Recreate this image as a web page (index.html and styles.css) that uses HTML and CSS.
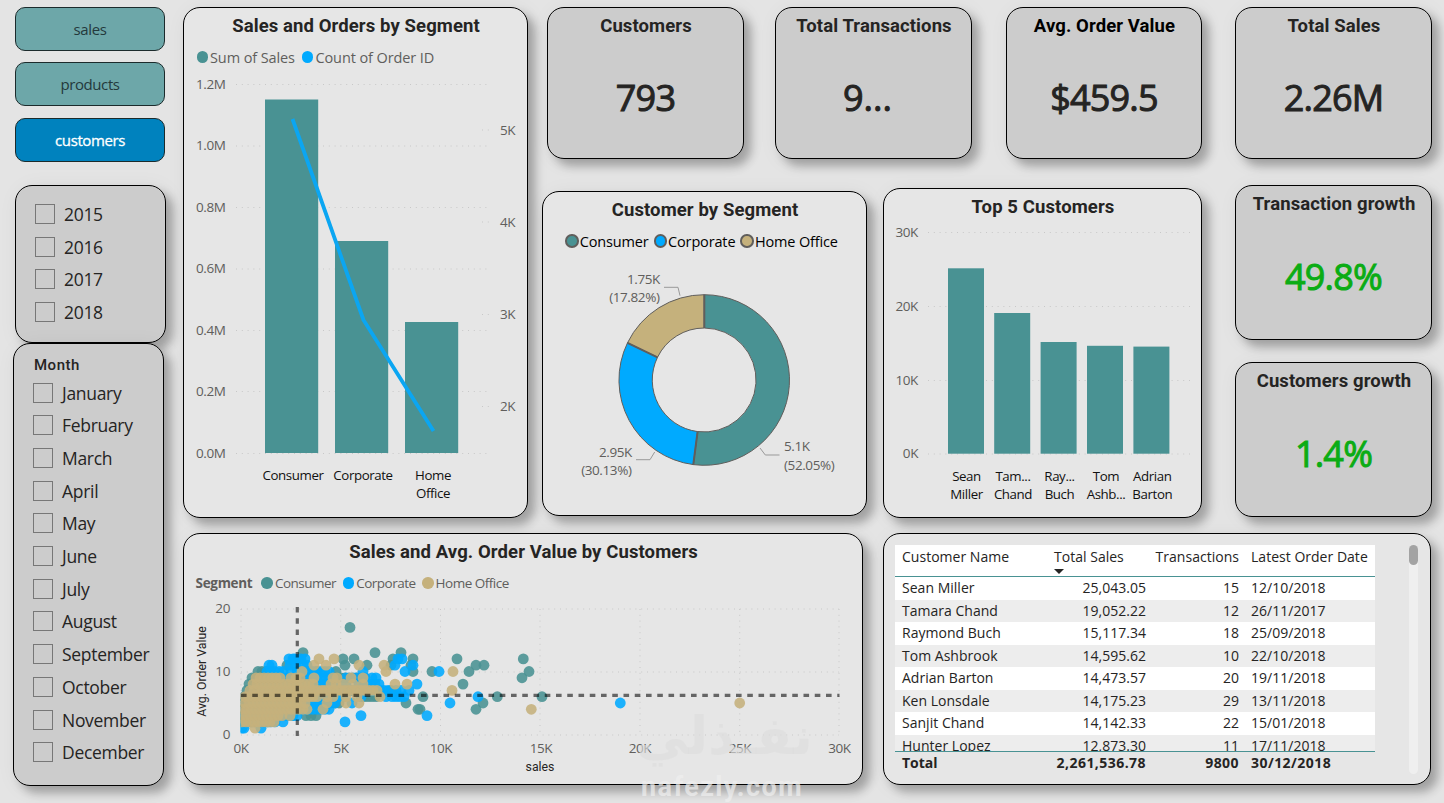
FILE: index.html
```
<!DOCTYPE html>
<html lang="en">
<head>
  <meta charset="utf-8">
  <title>Customers dashboard</title>
  <link rel="stylesheet" href="styles.css">
</head>
<body>
  <div id="wrap">
    <!-- sidebar -->
    <aside class="sidebar">
      <nav class="nav">
        <a href="javascript:;">sales</a>
        <a href="javascript:;">products</a>
        <a href="javascript:;" class="active">customers</a>
      </nav>
      <div class="card dark years">
        <ul class="checks">
          <li>2015</li>
          <li>2016</li>
          <li>2017</li>
          <li>2018</li>
        </ul>
      </div>
      <div class="card dark months">
        <h3>Month</h3>
        <ul class="checks">
          <li>January</li>
          <li>February</li>
          <li>March</li>
          <li>April</li>
          <li>May</li>
          <li>June</li>
          <li>July</li>
          <li>August</li>
          <li>September</li>
          <li>October</li>
          <li>November</li>
          <li>December</li>
        </ul>
      </div>
    </aside>

    <main class="main">
      <div class="top">
        <!-- sales and orders -->
        <section class="card segment">
          <h2>Sales and Orders by Segment</h2>
          <div class="legend">
            <span><i class="dot teal"></i>Sum of Sales</span>
            <span><i class="dot blue"></i>Count of Order ID</span>
          </div>
          <svg class="chart" width="343" height="440" viewBox="184 70 343 440">
            <g class="grid">
              <path d="M236 84.5H488M236 146H488M236 207.5H488M236 269H488M236 330.5H488M236 391.5H488M236 453.5H488"/>
              <path d="M482 130H492M482 222H492M482 314.5H492M482 406.5H492"/>
            </g>
            <g class="bar">
              <rect x="265" y="99.5" width="53.2" height="353.5"/>
              <rect x="335" y="241" width="53.2" height="212"/>
              <rect x="405" y="322" width="53.2" height="131"/>
            </g>
            <path class="line" d="M292.5 119L363.5 320L433.5 431"/>
            <g class="axis">
              <text x="196" y="89">1.2M</text>
              <text x="196" y="150">1.0M</text>
              <text x="196" y="212">0.8M</text>
              <text x="196" y="273">0.6M</text>
              <text x="196" y="335">0.4M</text>
              <text x="196" y="396">0.2M</text>
              <text x="196" y="458">0.0M</text>
              <text x="500" y="135">5K</text>
              <text x="500" y="227">4K</text>
              <text x="500" y="319">3K</text>
              <text x="500" y="411">2K</text>
            </g>
            <g class="cat">
              <text x="293" y="480">Consumer</text>
              <text x="363" y="480">Corporate</text>
              <text x="433" y="480">Home</text>
              <text x="433" y="498">Office</text>
            </g>
          </svg>
        </section>

        <div class="center">
          <div class="kpis">
            <section class="card dark kpi"><h2>Customers</h2><p>793</p></section>
            <section class="card dark kpi"><h2>Total Transactions</h2><p class="cut">9...</p></section>
            <section class="card dark kpi"><h2 class="black">Avg. Order Value</h2><p>$459.5</p></section>
          </div>
          <div class="charts">
            <section class="card donut">
              <h2>Customer by Segment</h2>
              <div class="legend">
                <span><i class="dot teal"></i>Consumer</span>
                <span><i class="dot blue"></i>Corporate</span>
                <span><i class="dot tan"></i>Home Office</span>
              </div>
              <svg class="chart" width="323" height="252" viewBox="543 260 323 252">
                <g class="slices">
                  <path fill="#499293" d="M704.3 294.7A85.3 85.3 0 1 1 693.3 464.6L697.6 431.6A52 52 0 1 0 704.3 328Z"/>
                  <path fill="#00aaff" d="M693.3 464.6A85.3 85.3 0 0 1 627.5 342.8L657.5 357.3A52 52 0 0 0 697.6 431.6Z"/>
                  <path fill="#c5b17c" d="M627.5 342.8A85.3 85.3 0 0 1 704.3 294.7V328A52 52 0 0 0 657.5 357.3Z"/>
                  <path class="split" d="M704.3 294.7V328M693.3 464.6L697.6 431.6M627.5 342.8L657.5 357.3"/>
                </g>
                <path class="leader" d="M680 295.7L678 287.3H664M654.7 452L650 459.7H636M760 448L765.3 455H779.5"/>
                <g class="axis end">
                  <text x="660" y="284">1.75K</text>
                  <text x="659.5" y="302">(17.82%)</text>
                  <text x="632" y="457">2.95K</text>
                  <text x="631.5" y="475">(30.13%)</text>
                </g>
                <g class="axis">
                  <text x="784" y="451">5.1K</text>
                  <text x="784" y="470">(52.05%)</text>
                </g>
              </svg>
            </section>
            <section class="card top5">
              <h2>Top 5 Customers</h2>
              <svg class="chart" width="317" height="290" viewBox="884 222 317 290">
                <path class="grid" d="M928 232.5H1192M928 306.5H1192M928 380.5H1192M928 454H1192"/>
                <g class="bar">
                  <rect x="948" y="268.3" width="36" height="185.4"/>
                  <rect x="994.2" y="313" width="36" height="140.7"/>
                  <rect x="1040.6" y="342" width="36" height="111.7"/>
                  <rect x="1087" y="345.8" width="36" height="107.9"/>
                  <rect x="1133.4" y="346.6" width="36" height="107.1"/>
                </g>
                <g class="axis end">
                  <text x="918" y="237">30K</text>
                  <text x="918" y="311">20K</text>
                  <text x="918" y="385">10K</text>
                  <text x="918" y="458">0K</text>
                </g>
                <g class="cat">
                  <text x="966.5" y="481">Sean</text>
                  <text x="966.5" y="499">Miller</text>
                  <text x="1013" y="481">Tam...</text>
                  <text x="1013" y="499">Chand</text>
                  <text x="1059.5" y="481">Ray...</text>
                  <text x="1059.5" y="499">Buch</text>
                  <text x="1106" y="481">Tom</text>
                  <text x="1106" y="499">Ashb...</text>
                  <text x="1152.3" y="481">Adrian</text>
                  <text x="1152.3" y="499">Barton</text>
                </g>
              </svg>
            </section>
          </div>
        </div>

        <div class="right">
          <section class="card dark kpi"><h2>Total Sales</h2><p>2.26M</p></section>
          <section class="card dark kpi growth"><h2>Transaction growth</h2><p>49.8%</p></section>
          <section class="card dark kpi growth"><h2>Customers growth</h2><p>1.4%</p></section>
        </div>
      </div>

      <div class="bottom">
        <!-- scatter -->
        <section class="card scatter">
          <h2>Sales and Avg. Order Value by Customers</h2>
          <div class="legend">
            <b>Segment</b>
            <span><i class="dot teal"></i>Consumer</span>
            <span><i class="dot blue"></i>Corporate</span>
            <span><i class="dot tan"></i>Home Office</span>
          </div>
          <svg class="chart" width="678" height="182" viewBox="184 595 678 182">
            <defs>
              <clipPath id="plot"><rect x="240.5" y="600" width="602" height="140"/></clipPath>
            </defs>
            <path class="grid" d="M241 609H839M241 672H839M241 735H839M241 609V735M340.7 609V735M440.5 609V735M540 609V735M640 609V735M739.7 609V735M839 609V735"/>
            <g id="dots" clip-path="url(#plot)"></g>
            <path class="avg" d="M241 695.4H839.5M297.3 607V736"/>
            <g class="axis end">
              <text x="230" y="613">20</text>
              <text x="230" y="676">10</text>
              <text x="230" y="739">0</text>
            </g>
            <g class="axis mid">
              <text x="241" y="753">0K</text>
              <text x="341" y="753">5K</text>
              <text x="441" y="753">10K</text>
              <text x="541" y="753">15K</text>
              <text x="640" y="753">20K</text>
              <text x="740" y="753">25K</text>
              <text x="839.5" y="753">30K</text>
            </g>
            <g class="axis-title">
              <text x="540" y="771">sales</text>
              <text transform="translate(206 671.5) rotate(-90)">Avg. Order Value</text>
            </g>
          </svg>
        </section>

        <!-- table -->
        <section class="card list">
          <div class="table">
            <div class="row head">
              <span>Customer Name</span><span>Total Sales<i class="sort"></i></span><span>Transactions</span><span>Latest Order Date</span>
            </div>
            <div class="rows">
              <div class="row"><span>Sean Miller</span><span>25,043.05</span><span>15</span><span>12/10/2018</span></div>
              <div class="row"><span>Tamara Chand</span><span>19,052.22</span><span>12</span><span>26/11/2017</span></div>
              <div class="row"><span>Raymond Buch</span><span>15,117.34</span><span>18</span><span>25/09/2018</span></div>
              <div class="row"><span>Tom Ashbrook</span><span>14,595.62</span><span>10</span><span>22/10/2018</span></div>
              <div class="row"><span>Adrian Barton</span><span>14,473.57</span><span>20</span><span>19/11/2018</span></div>
              <div class="row"><span>Ken Lonsdale</span><span>14,175.23</span><span>29</span><span>13/11/2018</span></div>
              <div class="row"><span>Sanjit Chand</span><span>14,142.33</span><span>22</span><span>15/01/2018</span></div>
              <div class="row"><span>Hunter Lopez</span><span>12,873.30</span><span>11</span><span>17/11/2018</span></div>
            </div>
            <div class="row total"><span>Total</span><span>2,261,536.78</span><span>9800</span><span>30/12/2018</span></div>
          </div>
          <div class="scroll"><i></i></div>
        </section>
      </div>
    </main>

    <div class="watermark">
      <span class="ar" lang="ar">نفـذلي</span>
      <span class="en">nafezly.com</span>
    </div>
  </div>

  <script>
    // x is the offset in the plot, keyed by avg. order value;
    // [from, to] is a run of neighbouring customers
    const data = [
      { color: '#499293', rows: {
        17: [109], 13: [62, 134, 160], 12: [58, 102, 113, 152, 172, 216],
        11: [46, 104, 126, 150, 170, 235], 10: [[17, 26], 76, 95, 172, 191, 228],
        9: [[11, 24], 96, [100, 125]], 8: [[8, 20], 85, 222], 7: [[6, 20], 110, 150],
        6: [[3, 20], [123, 135], 182], 5: [[3, 20], 94, 98, 165, 242],
        4: [[3, 40], 66, 74, 179, 177, 235], 3: [[3, 52], 65, 70, 75], 2: [[3, 30]],
      } },
      { color: '#00aaff', rows: {
        12: [48, 52, 54, 60, 64, 157, 161], 11: [28, 31, 49, 55, 62, 66, 154, 172],
        10: [[26, 38], 42, 50, [56, 90], 122, 164, 198], 9: [[28, 92], 105, 115, 124, 131, 135],
        8: [[20, 95], 105, [118, 140], 176], 7: [[15, 150], 155, 160, 168],
        6: [[10, 105], 120, 145, [151, 165], 237], 5: [[10, 95], 111, 209],
        4: [[8, 88]], 3: [[4, 56], 120, 186], 2: [[2, 36], 42, 104], 1: [1, 3, 20],
      } },
      { color: '#c5b17c', rows: {
        12: [78, 93], 11: [73, 85, 118, 143], 10: [61, 145, 212],
        9: [[15, 40], 50, 55, 59, 73, 92, 96, 110, 122],
        8: [[12, 72], 90, 95, 102, 112, 122, 154, 166], 7: [[9, 82], [84, 137], 211],
        6: [[4, 78], 86, 92, 105, 116, 139], 5: [[4, 66], 86, 105, 118],
        4: [[2, 66], 82], 3: [[1, 44], 49], 2: [[1, 36]], 1: [14],
      } },
    ]
    // customers above 12K
    const far = [
      [282.3, 12, 0], [243, 11, 0], [288, 10, 0], [281, 9, 0], [256.3, 6, 0], [301, 6, 0],
      [290.3, 4, 2], [379.3, 5, 1], [498.7, 5, 2],
    ]

    const oDots = document.querySelector('#dots')

    function addDot(x, value, color) {
      const dot = document.createElementNS('http://www.w3.org/2000/svg', 'circle')
      dot.setAttribute('cx', 241 + x)
      dot.setAttribute('cy', 734.5 - value * 6.3)
      dot.setAttribute('r', 5.4)
      dot.setAttribute('fill', color)
      oDots.appendChild(dot)
    }

    data.forEach(({ color, rows }) => {
      for (const value in rows) {
        rows[value].forEach((x) => {
          if (Array.isArray(x)) {
            for (let i = x[0]; i <= x[1]; i += 4) addDot(i, value, color)
          } else {
            addDot(x, value, color)
          }
        })
      }
    })
    far.forEach(([x, value, n]) => addDot(x, value, data[n].color))
  </script>
</body>
</html>
```
FILE: styles.css
```
* {
  margin: 0;
  padding: 0;
  box-sizing: border-box;
}
body {
  background-color: #e4e4e4;
  font-family: "Open Sans", "Noto Sans", sans-serif;
  color: #252423;
  overflow: hidden;
}
ul {
  list-style: none;
}
#wrap {
  position: relative;
  display: flex;
  width: 1444px;
  height: 803px;
  padding: 7px 0 0 13px;
}
.card {
  background-color: #e6e6e6;
  border: 1.4px solid #000;
  border-radius: 17px;
  box-shadow: 7px 7px 10px rgba(0, 0, 0, 0.27), 3px 3px 22px rgba(0, 0, 0, 0.06);
}
.card.dark {
  background-color: #ccc;
}
h2 {
  font: 700 18.5px/22px Roboto, sans-serif;
  letter-spacing: 0.1px;
  text-align: center;
  text-indent: 1px;
  white-space: nowrap;
}
h2.black {
  color: #000;
}

/* sidebar */
.sidebar {
  width: 153px;
  margin-right: 17px;
}
.nav {
  display: flex;
  flex-direction: column;
  gap: 11.3px;
  margin-left: 2px;
  width: 150px;
}
.nav a {
  height: 44px;
  border: 1.4px solid #1c2b2c;
  border-radius: 10px;
  background-color: #6da7a9;
  color: #24393c;
  font-size: 15px;
  line-height: 42px;
  letter-spacing: -0.4px;
  text-align: center;
  text-decoration: none;
}
.nav a.active {
  background-color: #0082be;
  color: #fff;
  -webkit-text-stroke: 0.3px;
}
.years {
  width: 151px;
  height: 158px;
  margin: 23px 0 0 2px;
  padding: 12px 0 0 20px;
}
.months {
  width: 151px;
  height: 443px;
  padding: 12px 0 0 20px;
}
.months h3 {
  font: 500 15px/18px Roboto, sans-serif;
  letter-spacing: 0.5px;
  margin-bottom: 2.7px;
}
.checks li {
  display: flex;
  align-items: center;
  gap: 9px;
  height: 32.7px;
  font-size: 17.5px;
  letter-spacing: -0.3px;
}
.checks li::before {
  content: "";
  width: 18px;
  height: 18px;
  margin-left: -1px;
  border: 1px solid #777;
}

/* layout */
.main {
  width: 1249px;
}
.top {
  display: flex;
  height: 511px;
}
.segment {
  width: 345px;
  height: 511px;
  padding-top: 7px;
}
.center {
  width: 660px;
  margin-left: 14px;
}
.kpis {
  display: flex;
  padding-left: 5px;
}
.kpi {
  width: 197px;
  height: 152px;
  padding-top: 7px;
}
.kpis .kpi + .kpi {
  margin-left: 31px;
}
.kpis .kpi:last-child {
  margin-left: 34px;
  width: 196px;
}
.kpi p {
  margin-top: 36px;
  font-size: 36px;
  line-height: 50px;
  letter-spacing: -0.8px;
  text-align: center;
  -webkit-text-stroke: 1px;
}
.kpi .cut {
  padding-right: 12px;
  letter-spacing: 0;
}
.right {
  display: flex;
  flex-direction: column;
  width: 197px;
  margin-left: 33px;
}
.right .growth {
  height: 155px;
  margin-top: 26px;
}
.right .growth:last-child {
  margin-top: 22px;
}
.growth p {
  margin-top: 37px;
  color: #0bac14;
}
.charts {
  display: flex;
  align-items: flex-start;
  margin-top: 29px;
}
.donut {
  width: 325px;
  height: 325px;
  margin-top: 3px;
  padding-top: 7px;
}
.top5 {
  width: 319px;
  height: 330px;
  margin-left: 16px;
  padding-top: 7px;
}
.bottom {
  display: flex;
  margin-top: 15px;
}
.scatter {
  width: 680px;
  height: 252px;
  padding-top: 7px;
}
.list {
  display: flex;
  width: 548px;
  height: 252px;
  margin-left: 20px;
  padding: 11px 0 0 11px;
}

/* legends */
.legend {
  display: flex;
  align-items: center;
  height: 20px;
  gap: 7px;
  color: #605e5c;
  white-space: nowrap;
}
.legend span {
  display: flex;
  align-items: center;
  gap: 2px;
}
.dot {
  width: 11.5px;
  height: 11.5px;
  border-radius: 50%;
}
.dot.teal {
  background-color: #499293;
}
.dot.blue {
  background-color: #00aaff;
}
.dot.tan {
  background-color: #c5b17c;
}
.segment .legend {
  margin-top: 10px;
  padding-left: 12.5px;
  font-size: 14.5px;
  letter-spacing: -0.1px;
}
.donut .legend {
  justify-content: center;
  gap: 5px;
  margin-top: 10px;
  padding-right: 6px;
  color: #000;
  font-size: 14.5px;
  letter-spacing: -0.15px;
}
.donut .legend span {
  gap: 1px;
}
.donut .dot {
  width: 13.5px;
  height: 13.5px;
  border: 2px solid #605e5c;
}
.scatter .legend {
  margin-top: 10px;
  padding-left: 11.5px;
  font-size: 13.5px;
  letter-spacing: -0.5px;
  gap: 6.5px;
}
.scatter .legend b {
  margin-right: 2.5px;
  letter-spacing: -0.3px;
}

/* charts */
.chart {
  display: block;
}
.segment .chart {
  margin-top: 3px;
}
.donut .chart {
  margin-top: 9px;
}
.top5 .chart {
  margin-top: 4px;
}
.scatter .chart {
  margin-top: 2px;
}
.grid {
  fill: none;
  stroke: #c8c8c8;
  stroke-dasharray: 1 4.8;
}
.bar {
  fill: #499293;
}
.line {
  fill: none;
  stroke: #0ba6f2;
  stroke-width: 3.8;
  stroke-linejoin: round;
}
.axis {
  fill: #605e5c;
  font-size: 13.5px;
  letter-spacing: -0.4px;
}
.end {
  text-anchor: end;
}
.mid {
  text-anchor: middle;
}
.cat {
  fill: #111;
  font-size: 13.3px;
  letter-spacing: -0.4px;
  text-anchor: middle;
}
.axis-title {
  fill: #252423;
  font: 400 12.3px Roboto, sans-serif;
  text-anchor: middle;
}
.slices path {
  stroke: #605e5c;
  stroke-width: 1;
}
.slices .split {
  stroke-width: 2;
}
.leader {
  fill: none;
  stroke: #999;
}
#dots circle {
  opacity: 0.88;
}
.avg {
  fill: none;
  stroke: #000;
  stroke-opacity: 0.56;
  stroke-width: 3.2;
  stroke-dasharray: 5.6 5.65;
}

/* table */
.table {
  width: 480px;
  font-size: 14px;
}
.row {
  display: grid;
  grid-template-columns: 152px 105px 92px 131px;
  height: 22.55px;
  line-height: 22.4px;
  letter-spacing: 0.02px;
  white-space: nowrap;
}
.row span {
  padding-left: 7px;
}
.row span:nth-child(2),
.row span:nth-child(3) {
  text-align: right;
  padding: 0 6px 0 0;
}
.row span:nth-child(3) {
  padding-right: 5px;
}
.row.head {
  height: 32px;
  line-height: 24px;
  background-color: #fff;
  border-bottom: 1.5px solid #499293;
}
.row.head span:nth-child(2) {
  text-align: left;
  padding-left: 7px;
}
.sort {
  display: block;
  width: 0;
  border: 5px solid transparent;
  border-top-color: #252423;
  border-bottom: 0;
}
.rows {
  height: 174px;
  overflow: hidden;
}
.rows .row {
  background-color: #ededed;
}
.rows .row:nth-child(odd) {
  background-color: #fff;
}
.row.total {
  border-top: 1.5px solid #499293;
  font-weight: 700;
  letter-spacing: 0.45px;
}
.row.total span:first-child {
  letter-spacing: 0;
}
.scroll {
  width: 9px;
  height: 229px;
  margin-left: 34px;
  border-radius: 5px;
  background-color: #efefef;
}
.scroll i {
  display: block;
  height: 20px;
  border-radius: 5px;
  background-color: #a3a3a3;
}

/* watermark lies over the cards */
.watermark {
  position: absolute;
  left: 636px;
  top: 706px;
  width: 172px;
  text-align: center;
}
.watermark span {
  display: block;
  white-space: nowrap;
}
.watermark .ar {
  height: 64px;
  font: 700 52px/60px "DejaVu Sans", sans-serif;
  color: rgba(221, 221, 221, 0.65);
}
.watermark .en {
  font: 700 27px/34px Roboto, sans-serif;
  letter-spacing: 1.4px;
  color: rgba(240, 240, 240, 0.7);
}
```
